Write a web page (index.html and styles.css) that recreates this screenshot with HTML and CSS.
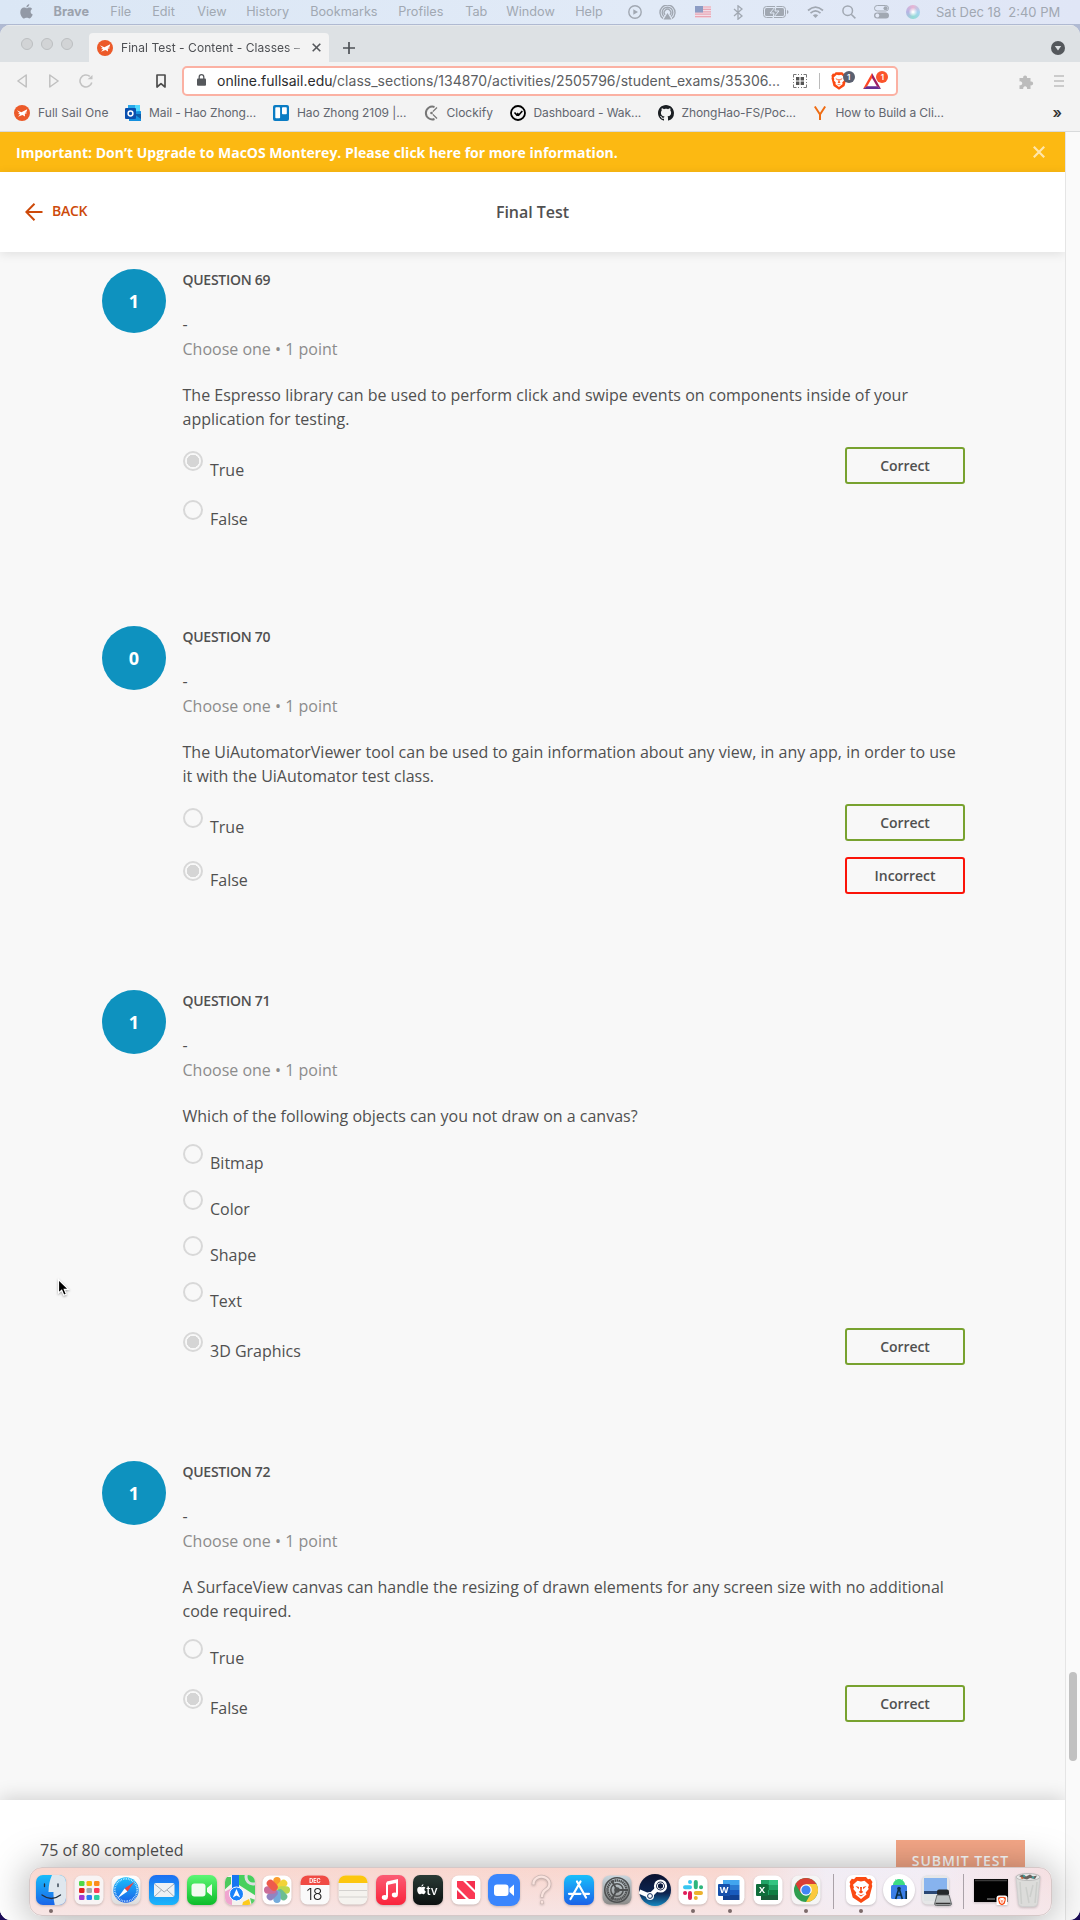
FILE: index.html
```html
<!DOCTYPE html>
<html lang="en">
<head>
<meta charset="utf-8">
<title>Final Test - Content - Classes</title>
<link rel="stylesheet" href="styles.css">
</head>
<body>
<svg class="defs" width="0" height="0">
  <defs>
    <symbol id="sail" viewBox="0 0 16 16"><circle cx="8" cy="8" r="8" fill="#ec5a29"/><path d="M2.800 5.200l4.600 2 5.800-3-.5 2.200-1.500.9 2.200.7-2.600.8.200 2.800-2.600-1.500-4.400 1.600 2.200-2.400-2.400-.4 1.800-1z" fill="#fff"/></symbol>
    <symbol id="lion" viewBox="0 0 24 26"><path d="M7 0h10l2 2.200 2.200-.4L23.500 5l-.8 2 .6 2-3 11.500L12 26l-8.300-5.500L.7 9l.6-2-.8-2 2.300-3.200 2.200.4z" fill="#fb4a13"/><path d="M12 4.500l3.500-.7 4.500 4-1 2.700.7 1.500-3 3.500.8 2L12 22l-5.500-4.500.8-2-3-3.500.7-1.500-1-2.700 4.500-4z" fill="#fff"/><path d="M6.500 9l3.500 1-.3 2.200zM17.500 9L14 10l.3 2.200zM11 10h2l-.3 3.500 1.500 1.500L12 16.500 9.800 15l1.500-1.500zM8.500 17L12 18.300 15.500 17 12 19.500z" fill="#fb4a13"/></symbol>
    <symbol id="apple" viewBox="0 0 14 16"><path d="M10 0c.1 1.800-1.300 3.500-3.100 3.600C6.700 2 8.200.300 10 0zM7.200 4.500c.7 0 1.700-.8 3-.8 1.100 0 2.200.5 2.900 1.600-2.500 1.500-2 4.900.6 5.900-.6 1.700-2 4.300-3.500 4.300-1.100 0-1.500-.7-2.900-.7s-1.800.7-2.900.7C2.600 15.500.3 12 .3 8.700c0-3.100 2-4.900 4-4.900 1.200 0 2.200.7 2.900.7z" fill="currentColor"/></symbol>
    <linearGradient id="gBlue" x2="0" y2="1"><stop stop-color="#1d6ff2"/><stop offset="1" stop-color="#19b5fb"/></linearGradient>
    <linearGradient id="gBlue2" x2="0" y2="1"><stop stop-color="#18bffb"/><stop offset="1" stop-color="#1b62e8"/></linearGradient>
    <linearGradient id="gGreen" x2="0" y2="1"><stop stop-color="#5df675"/><stop offset="1" stop-color="#0cbc29"/></linearGradient>
    <linearGradient id="gRed" x2="0" y2="1"><stop stop-color="#fb5c74"/><stop offset="1" stop-color="#fa233b"/></linearGradient>
    <linearGradient id="gDark" x2="0" y2="1"><stop stop-color="#2a3b36"/><stop offset="1" stop-color="#0c1010"/></linearGradient>
    <linearGradient id="gGrey" x2="0" y2="1"><stop stop-color="#c9d6de"/><stop offset="1" stop-color="#8b8a88"/></linearGradient>
    <linearGradient id="gSteam" x2="0" y2="1"><stop stop-color="#0b1230"/><stop offset=".6" stop-color="#0c2450"/><stop offset="1" stop-color="#1487c0"/></linearGradient>
    <linearGradient id="gPaper" x2="0" y2="1"><stop stop-color="#fff"/><stop offset="1" stop-color="#dcdcdc"/></linearGradient>
    <clipPath id="tile"><rect x="1" y="1" width="30" height="30" rx="7"/></clipPath>
  </defs>
</svg>

<div class="screen">
  <header class="menubar">
    <nav class="menus">
      <svg class="apple" width="13" height="15"><use href="#apple"/></svg>
      <b>Brave</b><span>File</span><span>Edit</span><span>View</span><span>History</span><span>Bookmarks</span><span>Profiles</span><span>Tab</span><span>Window</span><span>Help</span>
    </nav>
    <div class="status">
      <svg width="14" height="14" viewBox="0 0 14 14" fill="none" stroke="currentColor" stroke-width="1.400"><circle cx="7" cy="7" r="6.200"/><path d="M5.300 4.300L10 7l-4.700 2.700z" fill="currentColor" stroke="none"/></svg>
      <svg width="17" height="15" viewBox="0 0 17 15" fill="none" stroke="currentColor" stroke-width="1.400"><path d="M4 13.500a7.500 7.500 0 1 1 9 0M5 11.500a5.300 5.300 0 1 1 7 0M6 9.700a3.300 3.300 0 1 1 5 0"/><path d="M8.500 8l4 6.500h-8z" fill="currentColor" stroke="none"/></svg>
      <svg width="16" height="12" viewBox="0 0 16 12"><path fill="#f1dfe8" d="M0 0h16v12H0z"/><path d="M0 1h16M0 3.400h16M0 5.800h16M0 8.200h16M0 10.600h16" stroke="#e9a5b4" stroke-width="1.200"/><path fill="#8c9cc4" d="M0 0h8v6.500H0z"/></svg>
      <svg width="10" height="15" viewBox="0 0 10 15" fill="none" stroke="currentColor" stroke-width="1.300"><path d="M1 4l8 7-4 3.200V.8L9 4l-8 7"/></svg>
      <svg width="26" height="12" viewBox="0 0 26 12"><rect x=".5" y=".5" width="22" height="11" rx="3" fill="none" stroke="currentColor"/><rect x="2" y="2" width="19" height="8" rx="1.500" fill="currentColor"/><path d="M13 0L7 7h4l-1 5 6-7h-4z" fill="currentColor" stroke="#dfe8f6"/><path d="M24 4v4q1.500-.5 1.500-2T24 4" fill="currentColor"/></svg>
      <svg width="17" height="12" viewBox="0 0 17 12" fill="none" stroke="currentColor" stroke-width="1.700"><path d="M1 4.500q7.500-6.800 15 0M3.500 7.200q5-4.500 10 0"/><path d="M5.800 9.200q2.700-2 5.400 0L8.500 12z" fill="currentColor" stroke="none"/></svg>
      <svg width="14" height="14" viewBox="0 0 14 14" fill="none" stroke="currentColor" stroke-width="1.500"><circle cx="5.700" cy="5.700" r="4.800"/><path d="M9.200 9.200L13.400 13.400"/></svg>
      <svg width="15" height="14" viewBox="0 0 15 14"><rect x=".5" y=".5" width="14" height="5.500" rx="2.750" fill="none" stroke="currentColor"/><circle cx="11.500" cy="3.200" r="2" fill="currentColor"/><rect y="7.500" width="15" height="6" rx="3" fill="currentColor"/><circle cx="3.300" cy="10.500" r="1.900" fill="#e3e9f7"/></svg>
      <i class="siri"></i>
      <span class="clock">Sat Dec 18&nbsp; 2:40 PM</span>
    </div>
  </header>

  <main class="window">
    <div class="tabstrip">
      <div class="lights"><i></i><i></i><i></i></div>
      <div class="tab">
        <svg width="16" height="16"><use href="#sail"/></svg>
        <span class="tab-title">Final Test - Content - Classes –</span>
        <svg width="9" height="9" viewBox="0 0 9 9" stroke="#55585c" stroke-width="1.600"><path d="M.7.700l7.600 7.600M8.300.700L.7 8.300"/></svg>
      </div>
      <svg class="plus" width="12" height="12" viewBox="0 0 12 12" stroke="#4d5156" stroke-width="1.700"><path d="M6 0v12M0 6h12"/></svg>
      <svg class="tabsearch" width="14" height="14" viewBox="0 0 14 14"><circle cx="7" cy="7" r="7" fill="#54585c"/><path d="M3.800 5h6.400L7 9.500z" fill="#dde1e4"/></svg>
    </div>
    <div class="toolbar">
      <div class="navbtns">
        <svg width="10" height="14" viewBox="0 0 10 14" fill="none" stroke="#c0c0c0" stroke-width="1.500" stroke-linejoin="round"><path d="M9.200 1v12L.9 7z"/></svg>
        <svg width="10" height="14" viewBox="0 0 10 14" fill="none" stroke="#c0c0c0" stroke-width="1.500" stroke-linejoin="round"><path d="M.8 1v12L9.100 7z"/></svg>
        <svg width="14" height="14" viewBox="0 0 14 14" fill="none" stroke="#c3c3c3" stroke-width="1.600"><path d="M12.800 8.500A6 6 0 1 1 10.800 2.300"/><path d="M8.500 5.300h5V1z" fill="#c3c3c3" stroke="none"/></svg>
      </div>
      <svg class="bookmark" width="10" height="14" viewBox="0 0 10 14" fill="none" stroke="#4d4d4d" stroke-width="1.700" stroke-linejoin="round"><path d="M1 1h8v12L5 9.700 1 13z"/></svg>
      <div class="urlbox">
        <svg class="lock" width="9" height="12" viewBox="0 0 9 12"><rect y="4.500" width="9" height="7.300" rx="1" fill="#55585c"/><path d="M2.200 5V3a2.300 2.300 0 0 1 4.600 0v2" fill="none" stroke="#55585c" stroke-width="1.300"/></svg>
        <span class="url"><em>online.fullsail.edu</em>/class_sections/134870/activities/2505796/student_exams/35306...</span>
        <svg class="qr" width="14" height="14" viewBox="0 0 14 14"><path d="M.5 3.500v-3h3M10.500.500h3v3M13.500 10.500v3h-3M3.500 13.500h-3v-3M5 .500h1M8 .500h1M.5 5v1M.5 8v1M13.500 5v1M13.500 8v1M5 13.500h1M8 13.500h1" fill="none" stroke="#777"/><path d="M3 3h3.400v3.400H3zM7.600 3H11v3.400H7.600zM3 7.600h3.400V11H3zM7.600 7.600H11V11H7.600z" fill="#555"/></svg>
        <i class="rule"></i>
        <span class="badged shield"><svg width="16" height="18"><use href="#lion"/></svg><b>1</b></span>
        <span class="badged bat"><svg width="18" height="16" viewBox="0 0 18 16"><path d="M9 0L0 16l4-2.500L9 5z" fill="#ff4724"/><path d="M9 0v5l5 8.500L18 16z" fill="#9e1f63"/><path d="M0 16h18l-4-2.800H4z" fill="#662d91"/></svg><b>1</b></span>
      </div>
      <svg class="puzzle" width="15" height="15" viewBox="0 0 15 15"><path d="M.5 4h3.700a2 2 0 1 1 3.800 0h3.500v3.500a2 2 0 1 1 0 3.800V15H8a2 2 0 1 0-3.700 0H.5v-3.800a2 2 0 1 0 0-3.700z" fill="#bcbcbc"/></svg>
      <svg class="burger" width="10" height="12" viewBox="0 0 10 12" stroke="#bfbfbf" stroke-width="1.700"><path d="M0 1h10M0 6h10M0 11h10"/></svg>
    </div>
    <div class="bookmarks">
      <a><svg width="16" height="16"><use href="#sail"/></svg><span>Full Sail One</span></a>
      <a><svg width="16" height="16" viewBox="0 0 16 16"><path fill="#28a8ea" d="M3 0h12v8H3z"/><path fill="#50d9ff" d="M10 0h5v6h-5z"/><path fill="#1490df" d="M4 8l12-2v10H4z"/><path fill="#0f5ba7" d="M9 9l7 5V9z"/><rect y="3" width="11" height="11" rx="1" fill="#0a4fae"/><circle cx="5.500" cy="8.500" r="2.400" fill="none" stroke="#fff" stroke-width="1.500"/></svg><span>Mail - Hao Zhong...</span></a>
      <a><svg width="16" height="16" viewBox="0 0 16 16"><rect width="16" height="16" rx="2" fill="#0a7cc4"/><rect x="2.300" y="2.300" width="4.800" height="11" rx=".8" fill="#fff"/><rect x="9" y="2.300" width="4.800" height="7" rx=".8" fill="#fff"/></svg><span>Hao Zhong 2109 |...</span></a>
      <a><svg width="14" height="16" viewBox="0 0 14 16" fill="none" stroke="#777" stroke-width="2"><path d="M10.500 2A6.400 6.400 0 1 0 10.500 14"/><path d="M8.800 6.600L13 2.500M8.800 9.400L13 13.500" stroke-width="1.300"/><circle cx="7.500" cy="8" r="1.300" fill="#777" stroke="none"/></svg><span>Clockify</span></a>
      <a><svg width="16" height="16" viewBox="0 0 16 16" fill="none" stroke="#000" stroke-width="1.800"><circle cx="8" cy="8" r="7"/><path d="M4.500 7.500l2.300 2.500 1-1.200 1 1.200L12.300 6" stroke-width="1.600"/></svg><span>Dashboard - Wak...</span></a>
      <a><svg width="16" height="16" viewBox="0 0 16 16"><path fill="#1b1f23" d="M8 0C3.580 0 0 3.580 0 8c0 3.540 2.290 6.530 5.470 7.590.4.070.55-.17.55-.38 0-.19-.01-.82-.01-1.490-2.010.37-2.530-.49-2.690-.94-.09-.23-.48-.94-.82-1.130-.28-.15-.68-.52-.01-.53.63-.01 1.080.58 1.230.82.72 1.210 1.870.87 2.330.66.07-.52.28-.87.510-1.070-1.780-.2-3.640-.89-3.640-3.950 0-.87.310-1.590.820-2.150-.08-.2-.36-1.020.080-2.120 0 0 .67-.21 2.200.82.640-.18 1.320-.27 2-.27s1.360.09 2 .27c1.530-1.040 2.200-.82 2.200-.82.440 1.100.160 1.920.080 2.120.510.560.820 1.270.820 2.150 0 3.070-1.870 3.750-3.650 3.950.290.250.540.730.540 1.480 0 1.070-.01 1.930-.01 2.200 0 .21.150.46.550.38A8.010 8.010 0 0 0 16 8c0-4.420-3.580-8-8-8z"/></svg><span>ZhongHao-FS/Poc...</span></a>
      <a><svg width="12" height="14" viewBox="0 0 12 14" fill="none" stroke="#ef6c13" stroke-width="2"><path d="M.8.500L6 8.500 11.200.500M6 8v6"/></svg><span>How to Build a Cli...</span></a>
      <span class="more">»</span>
    </div>

    <div class="viewport">
      <div class="page">
        <div class="banner">
          <span>Important: Don’t Upgrade to MacOS Monterey. Please click here for more information.</span>
          <svg width="12" height="12" viewBox="0 0 12 12" stroke="#ffe6ab" stroke-width="2.200"><path d="M.8.800l10.400 10.400M11.200.800L.8 11.200"/></svg>
        </div>
        <div class="header">
          <a class="back"><svg width="18" height="18" viewBox="0 0 18 18" fill="none" stroke="#cd4a0a" stroke-width="2"><path d="M17.500 9H1.500M9.500.800L1.300 9l8.200 8.200"/></svg><span>BACK</span></a>
          <h1>Final Test</h1>
        </div>

        <div class="questions">
          <section class="question">
            <div class="score">1</div>
            <div class="body">
              <h2>QUESTION 69</h2>
              <p class="dash">-</p>
              <p class="meta">Choose one • 1 point</p>
              <p class="prompt">The Espresso library can be used to perform click and swipe events on components inside of your application for testing.</p>
              <div class="option graded"><i class="radio on"></i><span>True</span><b class="correct">Correct</b></div>
              <div class="option"><i class="radio"></i><span>False</span></div>
            </div>
          </section>
          <section class="question">
            <div class="score">0</div>
            <div class="body">
              <h2>QUESTION 70</h2>
              <p class="dash">-</p>
              <p class="meta">Choose one • 1 point</p>
              <p class="prompt">The UiAutomatorViewer tool can be used to gain information about any view, in any app, in order to use it with the UiAutomator test class.</p>
              <div class="option graded"><i class="radio"></i><span>True</span><b class="correct">Correct</b></div>
              <div class="option graded"><i class="radio on"></i><span>False</span><b class="incorrect">Incorrect</b></div>
            </div>
          </section>
          <section class="question">
            <div class="score">1</div>
            <div class="body">
              <h2>QUESTION 71</h2>
              <p class="dash">-</p>
              <p class="meta">Choose one • 1 point</p>
              <p class="prompt">Which of the following objects can you not draw on a canvas?</p>
              <div class="option"><i class="radio"></i><span>Bitmap</span></div>
              <div class="option"><i class="radio"></i><span>Color</span></div>
              <div class="option"><i class="radio"></i><span>Shape</span></div>
              <div class="option"><i class="radio"></i><span>Text</span></div>
              <div class="option graded"><i class="radio on"></i><span>3D Graphics</span><b class="correct">Correct</b></div>
            </div>
          </section>
          <section class="question">
            <div class="score">1</div>
            <div class="body">
              <h2>QUESTION 72</h2>
              <p class="dash">-</p>
              <p class="meta">Choose one • 1 point</p>
              <p class="prompt">A SurfaceView canvas can handle the resizing of drawn elements for any screen size with no additional code required.</p>
              <div class="option"><i class="radio"></i><span>True</span></div>
              <div class="option graded"><i class="radio on"></i><span>False</span><b class="correct">Correct</b></div>
            </div>
          </section>
        </div>

        <div class="footer">
          <span>75 of 80 completed</span>
          <button class="submit">SUBMIT TEST</button>
        </div>
      </div>
      <div class="scrollbar"><i></i></div>
    </div>
  </main>

  <svg class="cursor" width="14" height="20" viewBox="0 0 14 20"><path d="M1.500 1.500v13.500l3.200-2.800 2.100 5 2.500-1.100-2-4.800h4.200z" fill="#000" stroke="#fff" stroke-width="1.200"/></svg>

  <div class="dock">
    <div class="app running"><svg viewBox="0 0 32 32"><g clip-path="url(#tile)"><path fill="url(#gBlue2)" d="M0 0h32v32H0z"/><path d="M17.500 0q-4 8-4 18h5q-.3 7 1.500 14h12V0z" fill="#dfe7ee"/></g><path d="M9.500 10v2.500M23 10v2.500M7 21q9.500 7 18.500 0" fill="none" stroke="#22303f" stroke-width="1.300" stroke-linecap="round"/></svg></div>
    <div class="app"><svg viewBox="0 0 32 32"><rect x="1.500" y="1.500" width="29" height="29" rx="7" fill="#f8f4f4"/><g><rect x="6" y="7" width="5.500" height="5" rx="1.300" fill="#4fd84a"/><rect x="13.500" y="7" width="5.500" height="5" rx="1.300" fill="#f9b50c"/><rect x="21" y="7" width="5.500" height="5" rx="1.300" fill="#fb8c1e"/><rect x="6" y="14" width="5.500" height="5" rx="1.300" fill="#e22222"/><rect x="13.500" y="14" width="5.500" height="5" rx="1.300" fill="#a3a9ad"/><rect x="21" y="14" width="5.500" height="5" rx="1.300" fill="#fc3c5a"/><rect x="6" y="21" width="5.500" height="5" rx="1.300" fill="#a338cf"/><rect x="13.500" y="21" width="5.500" height="5" rx="1.300" fill="#287cf6"/><rect x="21" y="21" width="5.500" height="5" rx="1.300" fill="#2ccfa2"/></g></svg></div>
    <div class="app"><svg viewBox="0 0 32 32"><rect x="1.500" y="1.500" width="29" height="29" rx="7" fill="url(#gPaper)"/><circle cx="16" cy="16" r="12.700" fill="url(#gBlue2)"/><circle cx="16" cy="16" r="11.200" fill="none" stroke="#d7efff" stroke-width="1.800" stroke-dasharray=".7 1"/><path d="M24.500 7.800L17.400 17.500l-2.800-3z" fill="#f0403c"/><path d="M7.500 24.200l7.100-9.700 2.800 3z" fill="#fff"/></svg></div>
    <div class="app"><svg viewBox="0 0 32 32"><rect x="1" y="1" width="30" height="30" rx="7" fill="url(#gBlue)"/><rect x="6" y="9" width="20.500" height="14" rx="2" fill="#eef1f4"/><path d="M6.500 10l9.700 8 9.800-8M6.500 22.500l7-6.500M26 22.500L19 16" fill="none" stroke="#9aa4ad" stroke-width=".9"/></svg></div>
    <div class="app"><svg viewBox="0 0 32 32"><rect x="1" y="1" width="30" height="30" rx="7" fill="url(#gGreen)"/><rect x="5.500" y="9.500" width="14" height="13" rx="3" fill="#f2fbf2"/><path d="M21 14l5-4v12l-5-4z" fill="#f2fbf2"/></svg></div>
    <div class="app"><svg viewBox="0 0 32 32"><g clip-path="url(#tile)"><path fill="#f4f2ee" d="M0 0h32v32H0z"/><path d="M15 0h17v22L15 11z" fill="#47d05c"/><path d="M0 3h7v7L0 16z" fill="#4cc95d"/><path d="M0 18l8-4v18H0z" fill="#f0a5cf"/><path d="M18 32l1-4 6-3 2 7z" fill="#fdca1d"/><path d="M26 24l6 2v6h-4z" fill="#58cf67"/><path d="M8 0h7v18H8z" fill="#1675f2"/><circle cx="29" cy="3" r="7" fill="none" stroke="#dcdfe0" stroke-width="3"/></g><circle cx="12.500" cy="20" r="7" fill="#1a82fb" stroke="#fff"/><path d="M12.500 15l3.700 8.500-3.700-2-3.700 2z" fill="#fff"/></svg></div>
    <div class="app"><svg viewBox="0 0 32 32"><rect x="1.500" y="1.500" width="29" height="29" rx="7" fill="#fff"/><g opacity=".9"><rect x="12.300" y="3" width="7.400" height="12.500" rx="3.700" fill="#fb9316"/><rect x="12.300" y="3" width="7.400" height="12.500" rx="3.700" fill="#f1cf22" transform="rotate(45 16 16)"/><rect x="12.300" y="3" width="7.400" height="12.500" rx="3.700" fill="#b5d33b" transform="rotate(90 16 16)"/><rect x="12.300" y="3" width="7.400" height="12.500" rx="3.700" fill="#5db786" transform="rotate(135 16 16)"/><rect x="12.300" y="3" width="7.400" height="12.500" rx="3.700" fill="#66a2d8" transform="rotate(180 16 16)"/><rect x="12.300" y="3" width="7.400" height="12.500" rx="3.700" fill="#8577bb" transform="rotate(225 16 16)"/><rect x="12.300" y="3" width="7.400" height="12.500" rx="3.700" fill="#c55e8e" transform="rotate(270 16 16)"/><rect x="12.300" y="3" width="7.400" height="12.500" rx="3.700" fill="#ed4a38" transform="rotate(315 16 16)"/></g></svg></div>
    <div class="app"><svg viewBox="0 0 32 32"><rect x="1.500" y="1.500" width="29" height="29" rx="7" fill="#fafafa"/><path d="M1.500 11V8a7 7 0 0 1 7-6.500h15a7 7 0 0 1 7 6.500v3z" fill="#f04b44"/><text x="16" y="8.800" class="cal-m">DEC</text><text x="15.500" y="26" class="cal-d">18</text></svg></div>
    <div class="app"><svg viewBox="0 0 32 32"><rect x="1.500" y="1.500" width="29" height="29" rx="7" fill="#f5f3ef"/><path d="M1.500 9V8a7 7 0 0 1 7-6.500h15a7 7 0 0 1 7 6.500v1z" fill="#fcc60e"/><path d="M2 16.500h28M2 23h28" stroke="#d4d2cf"/></svg></div>
    <div class="app"><svg viewBox="0 0 32 32"><rect x="1" y="1" width="30" height="30" rx="7" fill="url(#gRed)"/><path d="M12 8.500l10-2.200v14.200M12 23V8.500M12 10l10-2.200" fill="none" stroke="#fff" stroke-width="2"/><ellipse cx="9.800" cy="23.500" rx="3" ry="2.400" fill="#fff"/><ellipse cx="19.800" cy="21" rx="3" ry="2.400" fill="#fff"/></svg></div>
    <div class="app"><svg viewBox="0 0 32 32"><rect x="1" y="1" width="30" height="30" rx="7" fill="url(#gDark)"/><svg x="5" y="10" width="9" height="11" color="#fff"><use href="#apple"/></svg><text x="14.500" y="20.500" class="tv">tv</text></svg></div>
    <div class="app"><svg viewBox="0 0 32 32"><rect x="1.500" y="1.500" width="29" height="29" rx="7" fill="#fff"/><path d="M7 7h6l12 12v6h-6L7 13z" fill="#fb3855"/><path d="M16 7h9v9zM7 16l9 9H7z" fill="#f52e4e"/></svg></div>
    <div class="app"><svg viewBox="0 0 32 32"><rect width="32" height="32" rx="9" fill="#3a86fd"/><rect x="6" y="10.500" width="14.500" height="11.500" rx="3" fill="#fff"/><path d="M21.500 14.500l4.500-4v11.500l-4.500-4z" fill="#fff"/></svg></div>
    <div class="app"><svg viewBox="0 0 32 32" fill="none"><g stroke="#c9b4b1" stroke-width="3.600"><path d="M7.500 11V10a8 7 0 1 1 12.500 5.500Q16 18 16 23.500M16 26.500v3.500"/></g><g stroke="#f9e3de" stroke-width="2.300"><path d="M7.500 10.500V10a8 7 0 1 1 12.500 5.500Q16 18 16 23M16 27v2.500"/></g></svg></div>
    <div class="app"><svg viewBox="0 0 32 32"><rect x="1" y="1" width="30" height="30" rx="7" fill="url(#gBlue2)"/><path d="M17.500 7.500L9 22.500M14 7.500l9 16M6 19.800h11.500M20.500 19.800H26M8.500 23.500l-1 1.500" fill="none" stroke="#fff" stroke-width="2.200" stroke-linecap="round"/></svg></div>
    <div class="app"><svg viewBox="0 0 32 32"><rect x="1.500" y="1.500" width="29" height="29" rx="7" fill="url(#gGrey)"/><g fill="none" stroke="#4d4f50"><circle cx="16" cy="16" r="12.200" stroke-width="1.600"/><circle cx="16" cy="16" r="9.500" stroke-width="2.500" stroke-dasharray="1.500 .5"/><circle cx="16" cy="16" r="6.200" stroke-width="1.400"/><circle cx="16" cy="16" r="2" stroke-width="1.600"/><path d="M16 16l11 0M16 16l-5.500-9.500M16 16l-5.500 9.500" stroke-width="1.800"/></g></svg></div>
    <div class="app"><svg viewBox="0 0 32 32"><circle cx="16" cy="16" r="16" fill="url(#gSteam)"/><path d="M.3 17.500l10.500 4.500L21 12" fill="none" stroke="#fff" stroke-width="4.500"/><circle cx="21.500" cy="12" r="5.500" fill="#0e1c40" stroke="#fff" stroke-width="2.200"/><circle cx="21.500" cy="12" r="3.200" fill="none" stroke="#fff" stroke-width="1"/><circle cx="11" cy="22" r="4" fill="#fff"/><circle cx="11" cy="22" r="2.400" fill="none" stroke="#0f2c5d"/></svg></div>
    <div class="app running"><svg viewBox="0 0 32 32"><rect x="1.500" y="1.500" width="29" height="29" rx="7" fill="#fff"/><g fill="none" stroke-width="4" stroke-linecap="round"><path d="M13 8v.1M8 13.300h5" stroke="#36c5f0"/><path d="M18.800 8v5.300M24 13.300h.1" stroke="#2eb67d"/><path d="M18.800 18.900H24M18.800 24v.1" stroke="#ecb22e"/><path d="M13 18.900V24M8 18.900h.1" stroke="#e01e5a"/></g></svg></div>
    <div class="app running"><svg viewBox="0 0 32 32"><rect x="1.500" y="1.500" width="29" height="29" rx="7" fill="#fff"/><path d="M9 6h16.500v5H9z" fill="#41a5ee"/><path d="M9 11h16.500v5H9z" fill="#2b7cd3"/><path d="M9 16h16.500v5H9z" fill="#185abd"/><path d="M9 21h16.500v5H9z" fill="#103f91"/><rect x="4" y="10" width="12" height="12" rx="1" fill="#1650ab"/><text x="10" y="19.300" class="office">W</text></svg></div>
    <div class="app"><svg viewBox="0 0 32 32"><rect x="1.500" y="1.500" width="29" height="29" rx="7" fill="#fff"/><path d="M9 6h8v5H9zM9 16h8v5H9z" fill="#21a366"/><path d="M17 6h9v5h-9z" fill="#33c481"/><path d="M9 11h8v5H9zM17 16h9v5h-9z" fill="#107c41"/><path d="M17 11h9v5h-9z" fill="#21a366"/><path d="M9 21h17v5H9z" fill="#185c37"/><rect x="4" y="10" width="12" height="12" rx="1" fill="#0f6d3a"/><text x="10" y="19.300" class="office">X</text></svg></div>
    <div class="app running"><svg viewBox="0 0 32 32"><rect x="1.500" y="1.500" width="29" height="29" rx="7" fill="#f5f5f5"/><circle cx="16" cy="16" r="12" fill="#2f9f4f"/><path d="M16 16L5.600 10A12 12 0 0 1 26.400 10z" fill="#d93f35"/><path d="M16 10h10.400A12 12 0 0 1 16 28l5.200-9z" fill="#fbc93d"/><path d="M5.600 10l5.200 9L16 10z" fill="#d93f35"/><circle cx="16" cy="16" r="5.800" fill="#fff"/><circle cx="16" cy="16" r="4.600" fill="#4285f4"/></svg></div>
    <div class="sep"></div>
    <div class="app running"><svg viewBox="0 0 32 32"><rect x="1" y="1" width="30" height="30" rx="7" fill="#fff"/><svg x="4" y="3" width="24" height="26"><use href="#lion"/></svg></svg></div>
    <div class="app"><svg viewBox="0 0 32 32"><circle cx="16" cy="16" r="16" fill="#fff"/><path d="M10.500 11a5.500 5.500 0 0 1 11 0zM12.500 5.500l1.200 1.500M19.500 5.500l-1.200 1.500" fill="#3ddc84" stroke="#3ddc84"/><rect x="8" y="11" width="16" height="14" rx="1.500" fill="#3b7fe8"/><path d="M16 14l-3.300 11M16 14l3.300 11M13.500 21h5M23.200 17v8" stroke="#0b3048" stroke-width="1.700" fill="none"/><circle cx="16" cy="14.500" r="1.800" fill="#0b3048"/></svg></div>
    <div class="app"><svg viewBox="0 0 32 32"><rect x="2" y="1.500" width="27" height="29" rx="5" fill="#e6e7e8"/><path d="M4 4h23v14H4z" fill="#87b3ee"/><path d="M4 17h23v3H4z" fill="#2a4774"/><path d="M4 20h23v7H4z" fill="#dfe3e4"/><rect x="17" y="15.500" width="12" height="6" rx="2" fill="#24282b"/><path d="M17 21h12l2.500 9a2 2 0 0 1-2 1.500h-13a2 2 0 0 1-2-1.500z" fill="#babfc0" stroke="#55595b" stroke-width=".8"/><path d="M15.500 29.500h15" stroke="#333" stroke-width="1.500"/></svg></div>
    <div class="sep"></div>
    <div class="app wide"><svg viewBox="0 0 34 28"><path fill="#020202" d="M0 2h34v23H0z"/><path d="M1 3.500h32" stroke="#3a3a3a" stroke-width="1.500"/><path d="M13 22h8" stroke="#999"/><rect x="22.500" y="18.500" width="11" height="11" rx="2.500" fill="#fff"/><svg x="23.700" y="19.500" width="8.500" height="9"><use href="#lion"/></svg></svg></div>
    <div class="app trash"><svg viewBox="0 0 26 34"><path d="M1 3.500h24l-2.500 27q-.3 3-4 3H7.500q-3.700 0-4-3z" fill="#dcdcda" stroke="#cfcfcf"/><path d="M5 9l1.500 22M11 14l3 16M18 12l-3 12M22 9l-2 21" stroke="#cccecb" stroke-width="1.500"/><ellipse cx="13" cy="4" rx="12" ry="3.500" fill="#e8e8e8" stroke="#aaa" stroke-width=".7"/><path d="M4 3l4-1.500 3 2 4-2 3 2 4-1-2 3.500-5-1-3 1.500-4-1z" fill="#67625e"/><path d="M8 2.500l2 1M17 4l2 1" stroke="#3aa2a0" stroke-width="1.500"/><path d="M6 4.500l2 1" stroke="#d36a35" stroke-width="1.500"/></svg></div>
  </div>
</div>
</body>
</html>
```
FILE: styles.css
```css
* { box-sizing: border-box; }
body { margin: 0; font-family: "Open Sans", "Noto Sans", sans-serif; color: #505050; }
h1, h2, p { margin: 0; }
svg { display: block; flex: none; }
.defs { position: absolute; }

.screen {
  position: relative;
  width: 1080px;
  height: 1920px;
  display: flex;
  flex-direction: column;
  overflow: hidden;
  background: linear-gradient(#a9b6cc 0, #b9bfda 60px, #1b0c58 200px);
}

/* macOS menu bar */
.menubar {
  height: 24px;
  flex: none;
  display: flex;
  align-items: center;
  justify-content: space-between;
  padding: 0 16px 0 20px;
  background: linear-gradient(90deg, #dbe7f5, #e1eaf7 60%, #e0e6f6);
  color: #a1a8b2;
  font: 12.7px "Inter", sans-serif;
}
.menus {
  display: grid;
  grid-template-columns: 33.500px 56.700px 42px 45px 49px 64px 88px 67px 41px 69px 40px;
  align-items: center;
  white-space: nowrap;
}
.menus b { font-weight: 700; color: #9ba2ad; }
.menus b, .menus span { margin-top: -1px; }
.apple { color: #9299a5; margin-top: -2px; }
.status { display: flex; align-items: center; }
.status > svg:nth-of-type(1) { margin-right: 17px; }
.status > svg:nth-of-type(2) { margin-right: 19px; }
.status > svg:nth-of-type(3) { margin-right: 22px; }
.status > svg:nth-of-type(4) { margin-right: 20px; }
.status > svg:nth-of-type(5) { margin-right: 18px; }
.status > svg:nth-of-type(6) { margin-right: 18px; }
.status > svg:nth-of-type(7) { margin-right: 18px; }
.status > svg:nth-of-type(8) { margin-right: 17px; }
.siri {
  width: 14px;
  height: 14px;
  border-radius: 50%;
  margin-right: 16px;
  background: radial-gradient(circle, #fff 5%, transparent 45%), conic-gradient(#e8b5d4, #a7d2f0, #93dcd5, #b6b4e4, #e8b5d4);
}
.clock { width: 128px; margin-top: -1px; white-space: nowrap; font-size: 13px; }

/* Browser window */
.window {
  flex: 1;
  min-height: 0;
  margin-top: 1px;
  display: flex;
  flex-direction: column;
  border-radius: 10px 10px 11px 11px;
  overflow: hidden;
  background: #f3f3f3;
  font-size: 16px;
}
.tabstrip {
  height: 37px;
  flex: none;
  display: flex;
  align-items: flex-end;
  background: #dde1e4;
  border-top: 1px solid #e7eaec;
}
.lights { display: flex; gap: 8px; padding: 0 16px 12px 21px; }
.lights i { width: 12px; height: 12px; border-radius: 50%; background: #d2d4d6; border: 1px solid #bcbfc1; }
.tab {
  width: 240px;
  height: 29px;
  display: flex;
  align-items: center;
  padding: 0 8px;
  border-radius: 4px 4px 0 0;
  background: #f3f3f3;
  font: 12px "Inter", sans-serif;
  color: #4e5054;
}
.tab-title {
  width: 183px;
  margin: 0 8px 0 8px;
  white-space: nowrap;
  overflow: hidden;
  letter-spacing: .05px;
  -webkit-mask: linear-gradient(90deg, #000 90%, rgba(0, 0, 0, .3));
  mask: linear-gradient(90deg, #000 90%, rgba(0, 0, 0, .3));
}
.plus { margin: 0 0 8px 14px; }
.tabsearch { margin: 0 15px 7px auto; }
.toolbar { height: 38px; flex: none; display: flex; align-items: center; }
.navbtns { display: flex; gap: 22px; padding-left: 17px; width: 156px; }
.navbtns svg:last-child { margin-left: -2px; }
.bookmark { margin-right: 16px; }
.urlbox {
  width: 716px;
  height: 30px;
  display: flex;
  align-items: center;
  padding-left: 13px;
  border: 2px solid #fbb1a3;
  border-radius: 5px;
  background: #fff;
}
.lock { margin-top: -2px; }
.url { width: 583px; margin: -1px 0 0 11px; font: 14px "Inter", sans-serif; letter-spacing: .015px; color: #5c5e62; white-space: nowrap; }
.url em { font-style: normal; color: #2b2c2e; }
.rule { width: 1px; height: 16px; background: #bbb; margin: 0 11px 0 12px; }
.badged { position: relative; width: 33px; height: 18px; display: flex; align-items: center; }
.badged b {
  position: absolute;
  left: 12px;
  top: -1px;
  width: 12px;
  height: 12px;
  border-radius: 50%;
  background: #5b6070;
  color: #fff;
  font: 600 8px/12px "Inter", sans-serif;
  text-align: center;
}
.bat b { left: 13px; background: #fb542b; }
.puzzle { margin-left: 121px; }
.burger { margin-left: 20px; }
.bookmarks {
  height: 32px;
  flex: none;
  display: grid;
  grid-template-columns: 111px 148px 150.500px 86px 148px 156px 1fr auto;
  align-items: center;
  padding: 0 18px 6px 14px;
  font: 12px "Inter", sans-serif;
  letter-spacing: -.08px;
  color: #62666f;
  border-bottom: 1px solid #d8dadb;
}
.bookmarks a { display: flex; align-items: center; gap: 8px; white-space: nowrap; }
.bookmarks a:first-child { letter-spacing: .05px; }
.bookmarks a:nth-child(4) { gap: 9px; letter-spacing: 0; }
.bookmarks a:nth-child(7) { gap: 10px; }
.more { font-size: 15px; font-weight: 600; color: #333; line-height: 16px; }

/* Page */
.viewport { flex: 1; min-height: 0; display: flex; }
.page { width: 1065px; display: flex; flex-direction: column; background: #f8f8f8; }
.scrollbar { flex: 1; border-left: 1px solid #e5e5e5; background: #fafafa; padding: 1540px 0 0 3px; }
.scrollbar i { display: block; width: 8px; height: 89px; border-radius: 4px; background: #c1c1c1; }
.banner {
  height: 40px;
  flex: none;
  display: flex;
  align-items: center;
  justify-content: space-between;
  padding: 1px 20px 0 16px;
  background: #fcb912;
  color: #fff;
  font-size: 14px;
  font-weight: 700;
}
.banner svg { margin-top: -2px; }
.header {
  height: 80px;
  flex: none;
  display: grid;
  grid-template-columns: 1fr auto 1fr;
  align-items: center;
  padding: 0 25px;
  background: #fff;
  box-shadow: 0 2px 10px rgba(0, 0, 0, .1);
}
.header h1 { font-size: 16px; font-weight: 600; letter-spacing: -.02px; }
.back { display: flex; align-items: center; gap: 9px; color: #cd4a0a; font-size: 14px; font-weight: 600; letter-spacing: -.3px; }
.back span { margin-top: -4px; }
.questions { flex: 1; min-height: 0; padding: 17px 0 0 102px; overflow: hidden; }
.question { display: flex; gap: 16.500px; padding-bottom: 80px; }
.score {
  width: 64px;
  height: 64px;
  flex: none;
  border-radius: 50%;
  background: #0e92bf;
  color: #fff;
  font-weight: 700;
  line-height: 64px;
  font-size: 18px;
  text-align: center;
}
.body { width: 782.500px; }
.question h2 { font-size: 14px; font-weight: 600; line-height: 22px; letter-spacing: -.28px; }
.dash { margin-top: 21px; line-height: 24px; }
.meta { color: #8c8c8c; line-height: 24px; margin-top: 1px; }
.prompt { line-height: 24px; margin: 22px 0 16px; }
.option { display: flex; height: 46px; }
.option span { margin: 7px auto 0 7.500px; line-height: 24px; }
.option.graded { height: 53px; }
.graded .radio { margin-top: 4px; }
.graded span { margin-top: 11px; }
.radio { width: 20px; height: 20px; border: 2px solid #d8d8d8; border-radius: 50%; }
.radio.on { background: radial-gradient(circle, #d5d5d5 6px, transparent 6.500px); }
.option b {
  width: 120px;
  height: 37px;
  border: 2px solid #78a22f;
  border-radius: 3px;
  font-size: 14px;
  font-weight: 600;
  line-height: 34px;
  text-align: center;
  letter-spacing: -.05px;
}
.option .incorrect { border-color: #fb1409; }
.footer {
  height: 120px;
  flex: none;
  display: flex;
  align-items: flex-start;
  justify-content: space-between;
  padding: 40px 40px 0;
  background: #fff;
  box-shadow: 0 -2px 18px rgba(0, 0, 0, .16);
}
.footer span { line-height: 22px; margin-top: -1px; }
.submit {
  width: 129px;
  height: 42px;
  border: 0;
  padding: 0;
  background: #f5a787;
  color: #fff;
  font: 600 14px/42px "Open Sans", sans-serif;
  letter-spacing: .9px;
}

.cursor { position: absolute; left: 57px; top: 1278px; filter: drop-shadow(0 1px 1px rgba(0, 0, 0, .35)); }

/* Dock */
.dock {
  position: absolute;
  left: 29px;
  top: 1867px;
  width: 1023px;
  height: 49px;
  display: flex;
  padding: 6px 2px 0;
  border: 1px solid #d5c8c8;
  border-radius: 13px;
  background: linear-gradient(rgba(255, 255, 255, 0), rgba(246, 235, 238, .7)), linear-gradient(90deg, #f9d8d0, #f9d6ce 68%, #f1edf5 78%, #f2edf6 88%, #f5dfe1);
  box-shadow: 0 2px 40px rgba(0, 0, 0, .36);
}
.app { width: 37.750px; height: 40px; flex: none; display: flex; flex-direction: column; align-items: center; }
.app > svg { width: 32px; height: 32px; filter: drop-shadow(0 1px 1px rgba(0, 0, 0, .2)); }
.running::after { content: ""; width: 4px; height: 4px; margin-top: 3px; border-radius: 50%; background: #7c6a6a; }
.app.wide > svg { width: 34px; height: 28px; margin-top: 3px; }
.app.trash { width: 35px; }
.app.trash > svg { width: 26px; height: 34px; margin-top: -1px; }
.sep { width: 17.200px; height: 35px; display: flex; justify-content: center; }
.sep::before { content: ""; width: 1px; background: #aaa2a8; }
.cal-m { font: 700 5.500px "Inter", sans-serif; fill: #fff; text-anchor: middle; }
.cal-d { font: 300 16px "Inter", sans-serif; fill: #222; text-anchor: middle; }
.tv { font: 500 12px "Inter", sans-serif; fill: #fff; }
.office { font: 700 9px "Open Sans", sans-serif; fill: #fff; text-anchor: middle; }
```
